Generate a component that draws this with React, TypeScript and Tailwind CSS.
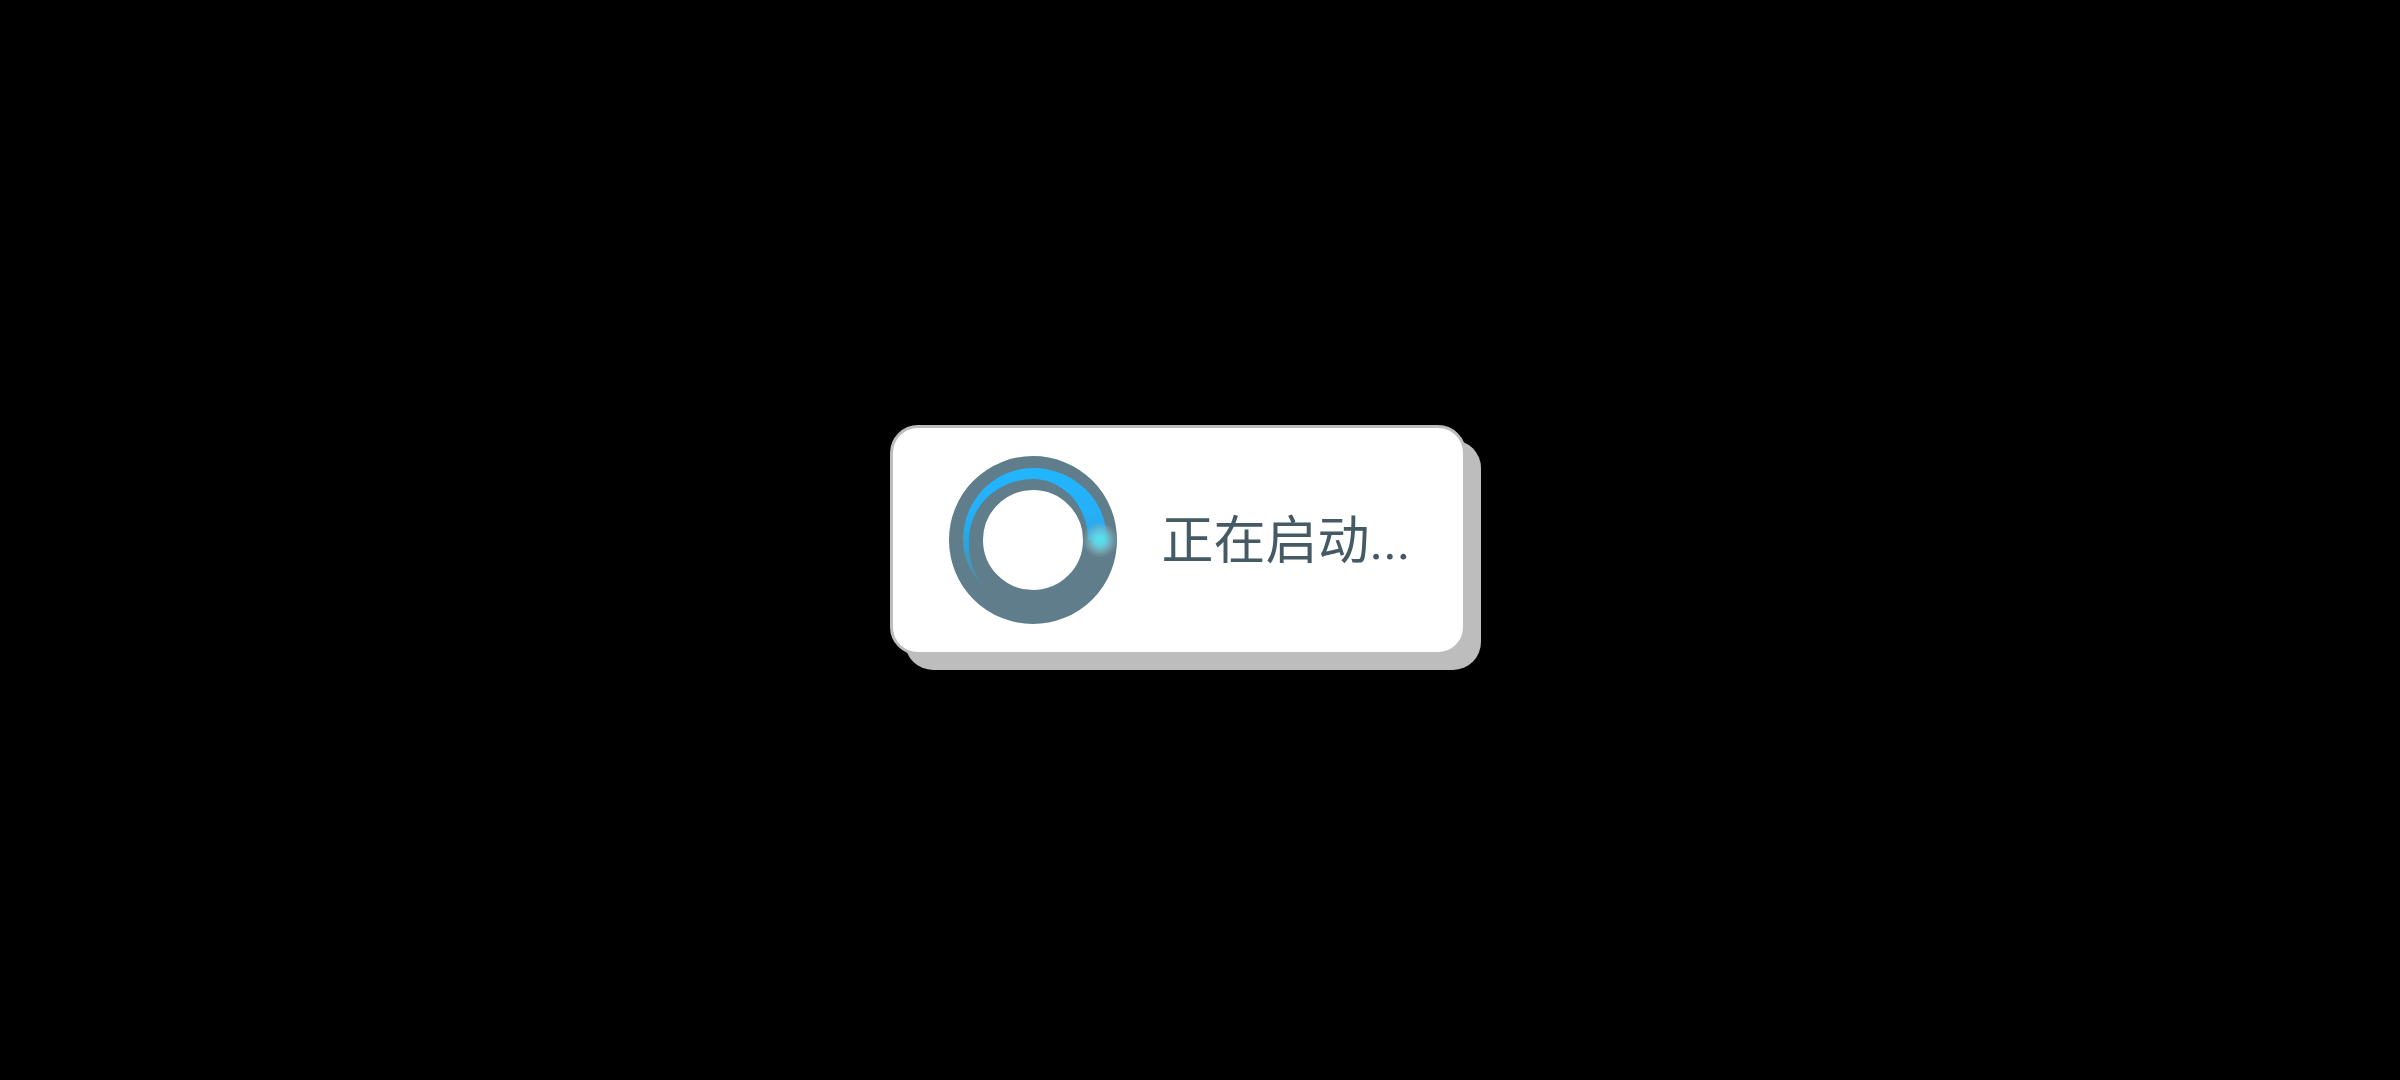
function Spinner() {
  return (
    <svg
      className="size-42 shrink-0"
      viewBox="-84 -84 168 168"
      aria-hidden="true"
    >
      <defs>
        <linearGradient
          id="trail"
          gradientUnits="userSpaceOnUse"
          x1="0"
          y1="-72"
          x2="0"
          y2="52"
        >
          <stop offset="0" stopColor="#22b5ff" />
          <stop offset="0.35" stopColor="#25b0f8" />
          <stop offset="0.6" stopColor="#2ba6e2" stopOpacity="0.95" />
          <stop offset="0.8" stopColor="#3b9fcb" stopOpacity="0.65" />
          <stop offset="1" stopColor="#4a94b5" stopOpacity="0" />
        </linearGradient>
        <radialGradient id="glow">
          <stop offset="0" stopColor="#58e0ee" />
          <stop offset="0.3" stopColor="#5cdae8" stopOpacity="0.95" />
          <stop offset="0.6" stopColor="#7cc8d4" stopOpacity="0.6" />
          <stop offset="0.8" stopColor="#8cbac5" stopOpacity="0.3" />
          <stop offset="1" stopColor="#8fb0bb" stopOpacity="0" />
        </radialGradient>
      </defs>

      {/* track */}
      <circle r="67" fill="none" stroke="#5f7d8b" strokeWidth="34" />

      {/* trail, thinner towards its tail */}
      <path
        d="M74 0A74 72 0 0 0 0 -72A70 72 0 0 0 -70 0C-70 20 -61 38 -43 52C-58 39 -65 21 -64 0A64 61 0 0 1 0 -61A55 61 0 0 1 55 0Z"
        fill="url(#trail)"
      />
      <circle cx="67" cy="0" r="18" fill="url(#glow)" />
    </svg>
  );
}

export default function App() {
  return (
    <main className="flex min-h-screen items-center justify-center bg-black pr-11 font-['Roboto','Noto_Sans_CJK_SC',sans-serif]">
      <div
        role="status"
        className="flex items-center gap-11 rounded-[28px] border-3 border-[#bdbdbd] bg-white py-7 pr-13 pl-14 shadow-[15px_15px_0_0_#bdbdbd]"
      >
        <Spinner />
        <p className="pt-1 text-[52px] leading-none text-[#455a64]">
          正在启动...
        </p>
      </div>
    </main>
  );
}
